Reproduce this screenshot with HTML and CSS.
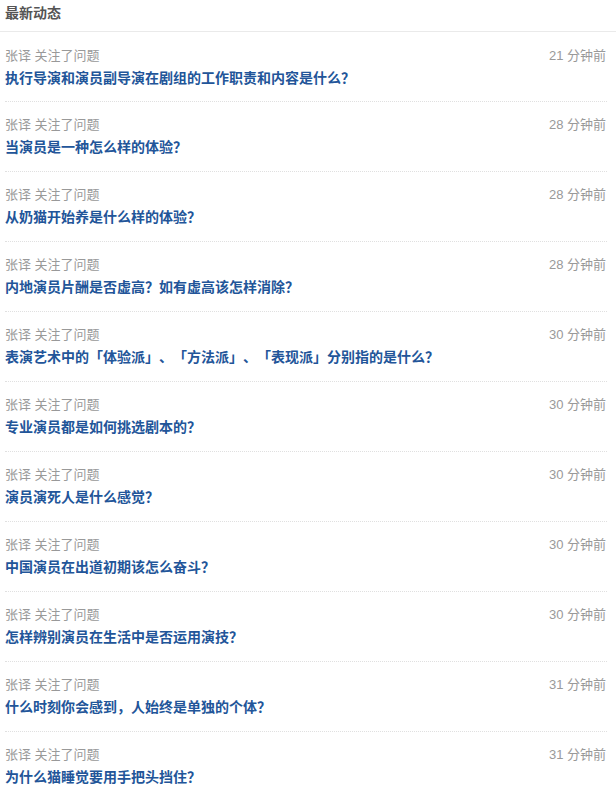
FILE: index.html
```html
<!DOCTYPE html>
<html lang="zh-CN">
<head>
  <meta charset="UTF-8" />
  <meta name="viewport" content="width=device-width, initial-scale=1" />
  <title>最新动态</title>
  <link rel="stylesheet" href="styles.css">
</head>
<body>
  <header class="feed-header">
    <h2>最新动态</h2>
  </header>

  <ul class="feed">
    <li class="feed-item">
      <div class="meta"><span>张译 关注了问题</span><span class="time">21 分钟前</span></div>
      <a class="title" href="#">执行导演和演员副导演在剧组的工作职责和内容是什么？</a>
    </li>
    <li class="feed-item">
      <div class="meta"><span>张译 关注了问题</span><span class="time">28 分钟前</span></div>
      <a class="title" href="#">当演员是一种怎么样的体验？</a>
    </li>
    <li class="feed-item">
      <div class="meta"><span>张译 关注了问题</span><span class="time">28 分钟前</span></div>
      <a class="title" href="#">从奶猫开始养是什么样的体验？</a>
    </li>
    <li class="feed-item">
      <div class="meta"><span>张译 关注了问题</span><span class="time">28 分钟前</span></div>
      <a class="title" href="#">内地演员片酬是否虚高？如有虚高该怎样消除？</a>
    </li>
    <li class="feed-item">
      <div class="meta"><span>张译 关注了问题</span><span class="time">30 分钟前</span></div>
      <a class="title" href="#">表演艺术中的「体验派」、「方法派」、「表现派」分别指的是什么？</a>
    </li>
    <li class="feed-item">
      <div class="meta"><span>张译 关注了问题</span><span class="time">30 分钟前</span></div>
      <a class="title" href="#">专业演员都是如何挑选剧本的？</a>
    </li>
    <li class="feed-item">
      <div class="meta"><span>张译 关注了问题</span><span class="time">30 分钟前</span></div>
      <a class="title" href="#">演员演死人是什么感觉？</a>
    </li>
    <li class="feed-item">
      <div class="meta"><span>张译 关注了问题</span><span class="time">30 分钟前</span></div>
      <a class="title" href="#">中国演员在出道初期该怎么奋斗？</a>
    </li>
    <li class="feed-item">
      <div class="meta"><span>张译 关注了问题</span><span class="time">30 分钟前</span></div>
      <a class="title" href="#">怎样辨别演员在生活中是否运用演技？</a>
    </li>
    <li class="feed-item">
      <div class="meta"><span>张译 关注了问题</span><span class="time">31 分钟前</span></div>
      <a class="title" href="#">什么时刻你会感到，人始终是单独的个体？</a>
    </li>
    <li class="feed-item">
      <div class="meta"><span>张译 关注了问题</span><span class="time">31 分钟前</span></div>
      <a class="title" href="#">为什么猫睡觉要用手把头挡住？</a>
    </li>
  </ul>
</body>
</html>
```

FILE: styles.css
```css
body {
  font-family: "Liberation Sans", "Noto Sans CJK SC", sans-serif;
  margin: 0;
  padding: 0;
  background-color: #fff;
  color: #333;
  text-spacing-trim: space-all;
}
.feed-header {
  height: 31px;
  padding: 0 5px;
  border-bottom: 1px solid #eaeaea;
}
.feed-header h2 {
  margin: 0;
  font-size: 14px;
  line-height: 27px;
  font-weight: bold;
  color: #555;
}
.feed {
  list-style: none;
  margin: 0 9px 0 5px;
  padding: 0;
}
.feed-item {
  padding: 13px 0 13px;
  border-bottom: 1px dotted #e0e0e0;
}
.feed-item:first-child {
  padding-top: 14px;
  padding-bottom: 12px;
}
.meta {
  display: flex;
  justify-content: space-between;
  font-size: 13px;
  line-height: 20px;
  color: #999;
}
.time {
  padding-right: 1px;
}
.title {
  display: block;
  margin-top: 1px;
  font-size: 14px;
  line-height: 22px;
  font-weight: bold;
  color: #259;
  text-decoration: none;
}
```
